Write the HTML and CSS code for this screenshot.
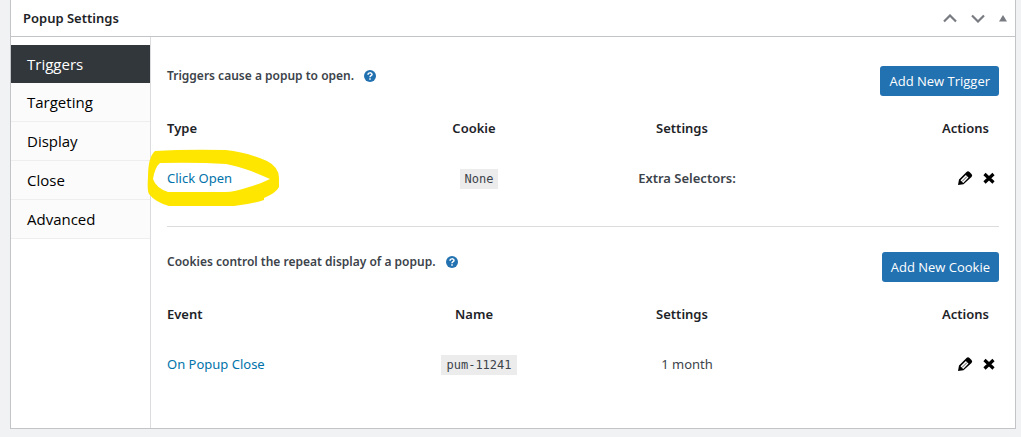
FILE: index.html
```html
<!DOCTYPE html>
<html lang="en">
<head>
    <meta charset="utf-8">
    <title>Popup Settings</title>
    <link rel="stylesheet" href="styles.css">
</head>
<body>
    <svg class="sprite" aria-hidden="true">
        <symbol id="pencil" viewBox="0 0 16 16">
            <path fill-rule="evenodd" d="M1 15l1-5.500L9.500 2q1.500-1.500 3 0l2 2q1.500 1.500 0 3L6.500 14.200zM3.500 10.200l2.700 2.700 5.300-5.300-2.700-2.700z"/>
            <path d="M5 11.500l5-5" fill="none" stroke="#000" stroke-width=".7"/>
        </symbol>
        <symbol id="cross" viewBox="0 0 12 12">
            <path d="M1.500 2l9 8.500M10.500 2l-9 8.500" fill="none" stroke="#000" stroke-width="3.200"/>
        </symbol>
        <symbol id="help" viewBox="0 0 12 12">
            <circle cx="6" cy="6" r="6" fill="#2271b1"/>
            <path d="M4 4.700C4 2.300 8 2.300 8 4.500C8 5.800 6 5.700 6 7.200M6 8.200v1.600" fill="none" stroke="#fff" stroke-width="1.500"/>
        </symbol>
    </svg>

    <div class="panel">
        <div class="panel-header">
            <h2>Popup Settings</h2>
            <div class="handles">
                <button type="button" aria-label="Move up"><svg width="14" height="9" viewBox="0 0 14 9"><path d="M1 7.500l6-6 6 6" fill="none" stroke="#787c82" stroke-width="2.200"/></svg></button>
                <button type="button" aria-label="Move down"><svg width="14" height="9" viewBox="0 0 14 9"><path d="M1 1.500l6 6 6-6" fill="none" stroke="#787c82" stroke-width="2.200"/></svg></button>
                <button type="button" aria-label="Toggle panel"><svg width="8" height="7" viewBox="0 0 8 7"><path d="M4 0l4 6.500H0z" fill="#787c82"/></svg></button>
            </div>
        </div>

        <div class="panel-body">
            <nav class="tabs">
                <a href="#triggers" class="active">Triggers</a>
                <a href="#targeting">Targeting</a>
                <a href="#display">Display</a>
                <a href="#close">Close</a>
                <a href="#advanced">Advanced</a>
            </nav>

            <div class="content">
                <section class="group" id="triggers">
                    <div class="intro">
                        <p>Triggers cause a popup to open. <a href="#help" aria-label="Help"><svg width="12" height="12"><use href="#help"/></svg></a></p>
                        <button type="button" class="button">Add New Trigger</button>
                    </div>
                    <table>
                        <thead>
                            <tr><th>Type</th><th>Cookie</th><th>Settings</th><th>Actions</th></tr>
                        </thead>
                        <tbody>
                            <tr>
                                <td>
                                    <span class="marked">
                                        <a href="#edit">Click Open</a>
                                        <svg class="marker" width="134" height="60" viewBox="0 0 134 60" aria-hidden="true"><path fill="#ffe600" fill-rule="evenodd" d="M9 2Q40 0 80 1Q100 3 121 12Q133 18 133 29V38Q130 44 118 49V51Q105 55 88 57H23Q9 53 3 45Q1 42 2 28Q2 8 9 2ZM14 14Q9 18 7 30Q10 39 22 43H80Q88 43 103 38Q114 35 124 30Q113 25 105 22Q91 17 80 15Q50 13 14 14Z"/></svg>
                                    </span>
                                </td>
                                <td><code>None</code></td>
                                <td><strong>Extra Selectors:</strong></td>
                                <td>
                                    <div class="actions">
                                        <button type="button" aria-label="Edit"><svg width="16" height="16"><use href="#pencil"/></svg></button>
                                        <button type="button" aria-label="Delete"><svg width="12" height="12"><use href="#cross"/></svg></button>
                                    </div>
                                </td>
                            </tr>
                        </tbody>
                    </table>
                </section>

                <section class="group" id="cookies">
                    <div class="intro">
                        <p>Cookies control the repeat display of a popup. <a href="#help" aria-label="Help"><svg width="12" height="12"><use href="#help"/></svg></a></p>
                        <button type="button" class="button">Add New Cookie</button>
                    </div>
                    <table>
                        <thead>
                            <tr><th>Event</th><th>Name</th><th>Settings</th><th>Actions</th></tr>
                        </thead>
                        <tbody>
                            <tr>
                                <td><a href="#edit">On Popup Close</a></td>
                                <td><code>pum-11241</code></td>
                                <td>1 month</td>
                                <td>
                                    <div class="actions">
                                        <button type="button" aria-label="Edit"><svg width="16" height="16"><use href="#pencil"/></svg></button>
                                        <button type="button" aria-label="Delete"><svg width="12" height="12"><use href="#cross"/></svg></button>
                                    </div>
                                </td>
                            </tr>
                        </tbody>
                    </table>
                </section>
            </div>
        </div>
    </div>
</body>
</html>
```

FILE: styles.css
```css
* {
    box-sizing: border-box;
}

body {
    margin: 0;
    padding: 0 5px 8px 10px;
    background: #f1f2f4;
    color: #3c434a;
    font-family: "Noto Sans", "Open Sans", sans-serif;
    font-size: 13px;
    line-height: 20px;
}

button {
    padding: 0;
    border: 0;
    background: none;
    font: inherit;
    cursor: pointer;
}

svg {
    display: block;
}

.sprite {
    display: none;
}

.panel {
    background: #fff;
    border: 1px solid #c3c4c7;
    border-top: 0;
}

.panel-header {
    display: flex;
    justify-content: space-between;
    align-items: center;
    height: 37px;
    padding: 0 8px 0 12px;
    border-bottom: 1px solid #c3c4c7;
}

h2 {
    margin: 0;
    color: #1d2327;
    font-size: 13px;
    font-weight: 600;
}

.handles {
    display: flex;
    align-items: center;
    gap: 14px;
}

.panel-body {
    display: flex;
}

.tabs {
    width: 140px;
    padding-top: 8px;
    border-right: 1px solid #dcdcde;
}

.tabs a {
    display: block;
    padding: 9px 16px;
    border-bottom: 1px solid #eee;
    background: #fbfbfb;
    color: #000;
    font-family: "Open Sans", sans-serif;
    font-size: 15px;
    text-decoration: none;
}

.tabs .active {
    border-bottom: 0;
    background: #32373c;
    color: #fff;
}

.content {
    flex: 1;
    padding: 0 16px;
}

.group {
    padding: 29px 0 18px;
}

.group + .group {
    padding: 25px 0 34px;
    border-top: 1px solid #dcdcde;
}

.intro {
    display: flex;
    justify-content: space-between;
    align-items: flex-start;
    margin-bottom: 12px;
}

.intro p {
    display: flex;
    align-items: center;
    gap: 10px;
    margin: 0;
    font-size: 12px;
    font-weight: 600;
}

.button {
    height: 30px;
    padding: 0 9px;
    border-radius: 3px;
    background: #2271b1;
    color: #fff;
    font-family: "Open Sans", sans-serif;
}

table {
    width: 100%;
    table-layout: fixed;
    border-collapse: collapse;
}

th, td {
    height: 40px;
    padding: 0;
    text-align: center;
}

td {
    height: 60px;
}

th {
    padding-right: 10px;
    color: #1d2327;
    font-weight: 600;
}

th:first-child, td:first-child {
    text-align: left;
}

th:last-child {
    text-align: right;
}

td a {
    color: #0073aa;
    text-decoration: none;
}

strong {
    font-weight: 600;
}

code {
    padding: 3px 5px;
    background: #ececec;
    font-family: "DejaVu Sans Mono", monospace;
    font-size: 12px;
}

.actions {
    display: flex;
    justify-content: flex-end;
    align-items: center;
    gap: 10px;
    padding-right: 4px;
}

.marked {
    position: relative;
}

/* highlighter ring over the link */
.marker {
    position: absolute;
    top: -20px;
    left: -21px;
    pointer-events: none;
}
```
